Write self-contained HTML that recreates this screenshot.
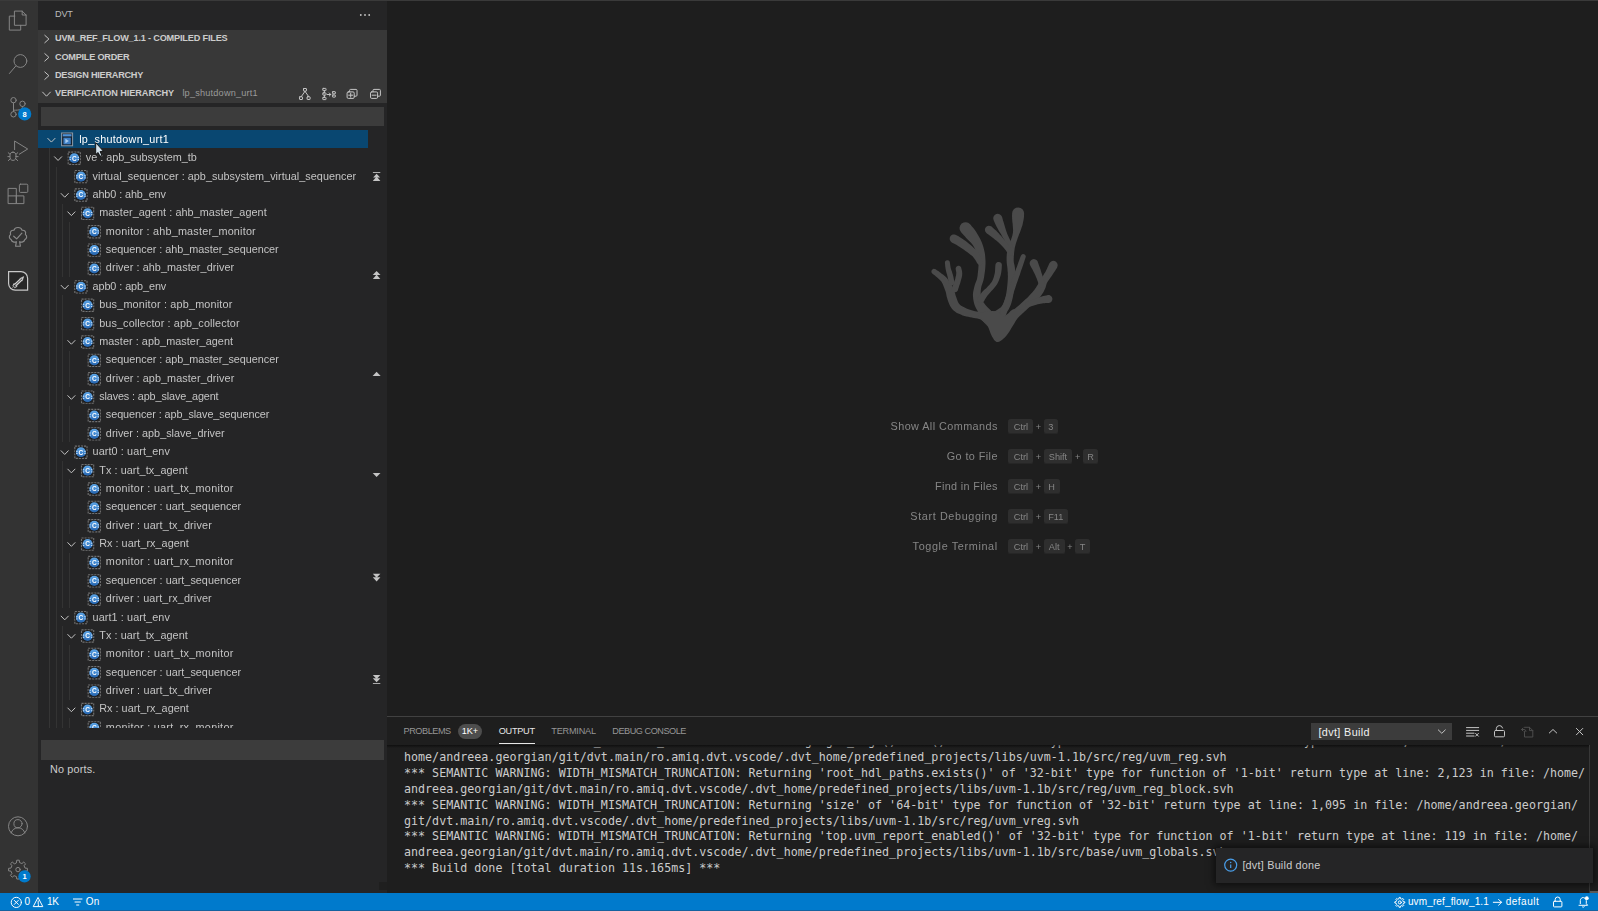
<!DOCTYPE html>
<html lang="en"><head><meta charset="utf-8"><title>DVT - Visual Studio Code</title>
<style>
html,body{margin:0;padding:0;}
body{width:1598px;height:911px;overflow:hidden;background:#1e1e1e;position:relative;
 font-family:"Liberation Sans",sans-serif;font-size:10.833px;color:#cccccc;}
.abs{position:absolute}
svg{position:absolute;overflow:visible}
.mono{font-family:"DejaVu Sans Mono","Liberation Mono",monospace}
.ai{fill:none;stroke:#858585;stroke-width:1;stroke-linecap:round;stroke-linejoin:round}
.cb{fill:none;stroke:#727272;stroke-width:1.1;stroke-dasharray:2.1 .95}
.ct{font-family:"Liberation Sans",sans-serif;font-size:6.5px;font-weight:700;fill:#fff;text-anchor:middle}
.cd{fill:none;stroke:#e4f0fc;stroke-width:.85}
.ic{fill:none;stroke:#c5c5c5;stroke-width:1;stroke-linecap:round;stroke-linejoin:round}
</style></head><body>
<div class="abs" id="activitybar" style="left:0;top:0;width:38px;height:893px;background:#333333"></div>
<div class="abs" id="sidebar" style="left:38px;top:0;width:349px;height:893px;background:#252526"></div>
<div class="abs" id="editor" style="left:387px;top:0;width:1211px;height:716px;background:#1e1e1e"></div>
<div class="abs" id="panel" style="left:387px;top:716px;width:1211px;height:177px;background:#1e1e1e;border-top:1px solid #414141;box-sizing:border-box"></div>
<div class="abs" id="statusbar" style="left:0;top:893px;width:1598px;height:18px;background:#007acc"></div>
<div class="abs" style="left:0;top:0;width:1598px;height:1px;background:#3a3a3a"></div>
<svg width="38" height="893" style="left:0;top:0" viewBox="0 0 38 893">
<g class="ai"><path d="M14.8 11.1h7.4l3.9 3.9v10.3H14.8z"/><path d="M22.2 11.1v3.9h3.9"/><path d="M14.8 16.1H9.3v14h11.4v-4.8"/></g>
<g class="ai"><circle cx="20.4" cy="61" r="6.4"/><path d="M15.9 65.9L9.4 73.5"/></g>
<g class="ai"><circle cx="13.5" cy="100.2" r="2.7"/><circle cx="13.5" cy="114.3" r="2.7"/><circle cx="22.5" cy="103.8" r="2.7"/><path d="M13.5 103v8.5"/><path d="M22.5 106.6c0 3.2-2.5 3.6-9 3.6"/></g>
<circle cx="24.7" cy="113.9" r="6.6" fill="#007acc"/>
<text x="24.7" y="116.6" text-anchor="middle" font-family="Liberation Sans, sans-serif" font-size="7.5" font-weight="700" fill="#fff">8</text>
<g class="ai"><path d="M14.6 149.6V141l13.1 8-8.4 5.2"/><ellipse cx="13" cy="156.3" rx="3.1" ry="4.1"/><path d="M10 154.3l-1.8-1.6M16 154.3l1.8-1.6M9.9 156.6H7.9M16.1 156.6h2M10.3 158.8l-2 1.8M15.7 158.8l2 1.8M10.6 153.2c.5-1.6 4.3-1.6 4.8 0"/></g>
<g class="ai"><path d="M8.5 188.4h7.8v15.2H8.5zM8.5 195.9h15.4v7.7h-7.6v-7.7"/><rect x="19.4" y="184.2" width="8.4" height="8.2" rx="1"/></g>
<g class="ai" style="stroke-width:1.15;stroke:#8a8a8a"><path d="M16.400 241.700C14.500 242.600 11.600 241.900 11.200 239.600C9 238.900 8.600 235.600 10.600 234.400C9.600 231.900 11.600 229.800 13.900 230.300C14.500 228.400 16.300 227.500 18 227.500C19.700 227.500 21.500 228.400 22.100 230.300C24.400 229.800 26.400 231.900 25.400 234.400C27.400 235.600 27 238.900 24.800 239.600C24.400 241.900 21.500 242.600 19.600 241.700L20.400 246.200H15.600Z"/><path d="M13.700 236.200l3 2.700 5.200-5.700"/></g>
<path d="M8.6 271.6H21a6.6 6.600 0 0 1 6.600 6.600v12H15.200a6.600 6.600 0 0 1-6.600-6.600z" fill="#272727" stroke="#c8c8c8" stroke-width="1.2"/>
<g fill="none" stroke-linecap="round" stroke-linejoin="round"><path d="M15 285.300l6.300-5.900" stroke="#d4d4d4" stroke-width="3.200" stroke-linecap="butt"/><path d="M20.200 278.400l3.500-1.800-1.300 3.800z" fill="#d4d4d4" stroke="#d4d4d4" stroke-width=".6"/><path d="M15.200 285.100l6.600-6.200" stroke="#2a2a2a" stroke-width=".9"/><path d="M14.100 283.500l-1.100 2.300M16.900 286.500l-2.300 1.100M13.900 286.400l-.9.900" stroke="#d4d4d4" stroke-width="1"/></g>
<g class="ai"><circle cx="18" cy="826.3" r="9.5"/><circle cx="18" cy="823.7" r="4.1"/><path d="M11.2 833c.8-3.400 3.600-5.200 6.800-5.200s6 1.800 6.800 5.200"/></g>
<g class="ai"><path d="M16.48 862.56L16.74 860.18L19.26 860.18L19.52 862.56L21.91 863.55L23.76 862.05L25.55 863.84L24.05 865.69L25.04 868.08L27.42 868.34L27.42 870.86L25.04 871.12L24.05 873.51L25.55 875.36L23.76 877.15L21.91 875.65L19.52 876.64L19.26 879.02L16.74 879.02L16.48 876.64L14.09 875.65L12.24 877.15L10.45 875.36L11.95 873.51L10.96 871.12L8.58 870.86L8.58 868.34L10.96 868.08L11.95 865.69L10.45 863.84L12.24 862.05L14.09 863.55Z"/><circle cx="18" cy="869.6" r="2.2"/></g>
<circle cx="24.5" cy="876.4" r="6.2" fill="#007acc"/>
<text x="24.5" y="879" text-anchor="middle" font-family="Liberation Sans, sans-serif" font-size="7.5" font-weight="700" fill="#fff">1</text>
</svg>
<div style="position:absolute;left:55.00px;top:0.00px;height:29.17px;line-height:29.17px;font-size:9.167px;font-weight:400;color:#bbbbbb;letter-spacing:-0.237px;white-space:pre;">DVT</div>
<svg width="14" height="4" style="left:359px;top:13px"><circle cx="1.8" cy="2" r="0.9" fill="#c5c5c5"/><circle cx="6" cy="2" r="0.9" fill="#c5c5c5"/><circle cx="10.2" cy="2" r="0.9" fill="#c5c5c5"/></svg>
<div class="abs" style="left:38px;top:30px;width:349px;height:73px;background:#383838"></div>
<div style="position:absolute;left:55.00px;top:29.17px;height:18.33px;line-height:18.33px;font-size:9.167px;font-weight:700;color:#cccccc;letter-spacing:-0.184px;white-space:pre;">UVM_REF_FLOW_1.1 - COMPILED FILES</div>
<div style="position:absolute;left:55.00px;top:47.50px;height:18.33px;line-height:18.33px;font-size:9.167px;font-weight:700;color:#cccccc;letter-spacing:-0.233px;white-space:pre;">COMPILE ORDER</div>
<div style="position:absolute;left:55.00px;top:65.84px;height:18.33px;line-height:18.33px;font-size:9.167px;font-weight:700;color:#cccccc;letter-spacing:-0.251px;white-space:pre;">DESIGN HIERARCHY</div>
<div style="position:absolute;left:55.00px;top:84.17px;height:18.33px;line-height:18.33px;font-size:9.167px;font-weight:700;color:#cccccc;letter-spacing:-0.087px;white-space:pre;">VERIFICATION HIERARCHY</div>
<div style="position:absolute;left:182.40px;top:84.17px;height:18.33px;line-height:18.33px;font-size:9.167px;font-weight:400;color:#9a9a9a;letter-spacing:0.200px;white-space:pre;">lp_shutdown_urt1</div>
<svg width="349" height="80" style="left:38px;top:28px" viewBox="38 28 349 80"><g class="ic">
<path d="M44.8 35.30l4.100 3.700-4.100 3.700"/>
<path d="M44.8 53.63l4.100 3.700-4.100 3.700"/>
<path d="M44.8 71.97l4.100 3.700-4.100 3.700"/>
<path d="M42.600 92.100l3.900 4.100 3.900-4.100"/>
</g>
<g class="ic">
<rect x="303.500" y="88.500" width="3" height="2.600" rx=".4"/><rect x="299.500" y="96.800" width="3" height="2.700" rx=".4"/><rect x="307.100" y="96.800" width="3" height="2.700" rx=".4"/><path d="M305 91.300l-3.700 5.300M305 91.300l3.700 5.300"/>
<rect x="322.800" y="88.400" width="3.200" height="2.200" rx=".4"/><rect x="322.800" y="92.900" width="3.200" height="2.200" rx=".4"/><rect x="322.800" y="97.400" width="3.200" height="2.200" rx=".4"/><path d="M324.400 90.700v2.100M324.400 95.200v2.100M327.300 94.500h3.400M329.300 93l1.500 1.500-1.500 1.500"/><rect x="332.500" y="91.700" width="2.900" height="2.100" rx=".4"/><rect x="332.500" y="95" width="2.900" height="2.100" rx=".4"/>
<rect x="347.100" y="91.900" width="7.100" height="6.500" rx="1.200"/><path d="M349.600 91.800v-1.400a1 1 0 0 1 1-1h5.400a1 1 0 0 1 1 1v4.800a1 1 0 0 1-1 1h-1.600M348.700 95.200h4M350.700 93.200v4"/>
<rect x="370.500" y="91.900" width="7.100" height="6.500" rx="1.200"/><path d="M373 91.800v-1.400a1 1 0 0 1 1-1h5.400a1 1 0 0 1 1 1v4.800a1 1 0 0 1-1 1h-1.600M372.100 95.200h4"/>
</g></svg>
<div class="abs" style="left:41px;top:106.6px;width:343px;height:19.5px;background:#3c3c3c"></div>
<div class="abs" style="left:41px;top:740px;width:343px;height:19.5px;background:#3c3c3c"></div>
<div style="position:absolute;left:50.00px;top:760.00px;height:18.33px;line-height:18.33px;font-size:10.833px;font-weight:400;color:#cccccc;letter-spacing:0.161px;white-space:pre;">No ports.</div>
<div class="abs" id="tree" style="left:38px;top:130px;width:349px;height:597.5px;overflow:hidden;will-change:transform">
<div class="abs" style="left:0;top:0;width:330px;height:18.38px;background:#094771"></div>
<div class="abs" style="left:11.00px;top:18.38px;width:1px;height:588.00px;background:#353535"></div>
<div class="abs" style="left:18.00px;top:36.75px;width:1px;height:569.62px;background:#333333"></div>
<div class="abs" style="left:24.00px;top:73.50px;width:1px;height:73.50px;background:#333333"></div>
<div class="abs" style="left:24.00px;top:165.38px;width:1px;height:147.00px;background:#333333"></div>
<div class="abs" style="left:24.00px;top:330.75px;width:1px;height:147.00px;background:#333333"></div>
<div class="abs" style="left:24.00px;top:496.12px;width:1px;height:110.25px;background:#333333"></div>
<div class="abs" style="left:31.00px;top:91.88px;width:1px;height:55.12px;background:#333333"></div>
<div class="abs" style="left:31.00px;top:220.50px;width:1px;height:36.75px;background:#333333"></div>
<div class="abs" style="left:31.00px;top:275.62px;width:1px;height:36.75px;background:#333333"></div>
<div class="abs" style="left:31.00px;top:349.12px;width:1px;height:55.12px;background:#333333"></div>
<div class="abs" style="left:31.00px;top:422.62px;width:1px;height:55.12px;background:#333333"></div>
<div class="abs" style="left:31.00px;top:514.50px;width:1px;height:55.12px;background:#333333"></div>
<div class="abs" style="left:31.00px;top:588.00px;width:1px;height:18.38px;background:#333333"></div>
<div style="position:absolute;left:41.20px;top:-0.20px;height:18.38px;line-height:18.38px;font-size:10.833px;font-weight:400;color:#ffffff;letter-spacing:0.275px;white-space:pre;">lp_shutdown_urt1</div>
<div style="position:absolute;left:47.87px;top:18.18px;height:18.38px;line-height:18.38px;font-size:10.833px;font-weight:400;color:#c4c4c4;letter-spacing:-0.026px;white-space:pre;">ve : apb_subsystem_tb</div>
<div style="position:absolute;left:54.53px;top:36.55px;height:18.38px;line-height:18.38px;font-size:10.833px;font-weight:400;color:#c4c4c4;letter-spacing:0.037px;white-space:pre;">virtual_sequencer : apb_subsystem_virtual_sequencer</div>
<div style="position:absolute;left:54.53px;top:54.92px;height:18.38px;line-height:18.38px;font-size:10.833px;font-weight:400;color:#c4c4c4;letter-spacing:-0.093px;white-space:pre;">ahb0 : ahb_env</div>
<div style="position:absolute;left:61.20px;top:73.30px;height:18.38px;line-height:18.38px;font-size:10.833px;font-weight:400;color:#c4c4c4;letter-spacing:0.066px;white-space:pre;">master_agent : ahb_master_agent</div>
<div style="position:absolute;left:67.87px;top:91.67px;height:18.38px;line-height:18.38px;font-size:10.833px;font-weight:400;color:#c4c4c4;letter-spacing:0.201px;white-space:pre;">monitor : ahb_master_monitor</div>
<div style="position:absolute;left:67.87px;top:110.05px;height:18.38px;line-height:18.38px;font-size:10.833px;font-weight:400;color:#c4c4c4;letter-spacing:-0.016px;white-space:pre;">sequencer : ahb_master_sequencer</div>
<div style="position:absolute;left:67.87px;top:128.43px;height:18.38px;line-height:18.38px;font-size:10.833px;font-weight:400;color:#c4c4c4;letter-spacing:0.074px;white-space:pre;">driver : ahb_master_driver</div>
<div style="position:absolute;left:54.53px;top:146.80px;height:18.38px;line-height:18.38px;font-size:10.833px;font-weight:400;color:#c4c4c4;letter-spacing:-0.071px;white-space:pre;">apb0 : apb_env</div>
<div style="position:absolute;left:61.20px;top:165.18px;height:18.38px;line-height:18.38px;font-size:10.833px;font-weight:400;color:#c4c4c4;letter-spacing:0.182px;white-space:pre;">bus_monitor : apb_monitor</div>
<div style="position:absolute;left:61.20px;top:183.55px;height:18.38px;line-height:18.38px;font-size:10.833px;font-weight:400;color:#c4c4c4;letter-spacing:0.113px;white-space:pre;">bus_collector : apb_collector</div>
<div style="position:absolute;left:61.20px;top:201.93px;height:18.38px;line-height:18.38px;font-size:10.833px;font-weight:400;color:#c4c4c4;letter-spacing:0.058px;white-space:pre;">master : apb_master_agent</div>
<div style="position:absolute;left:67.87px;top:220.30px;height:18.38px;line-height:18.38px;font-size:10.833px;font-weight:400;color:#c4c4c4;letter-spacing:-0.011px;white-space:pre;">sequencer : apb_master_sequencer</div>
<div style="position:absolute;left:67.87px;top:238.68px;height:18.38px;line-height:18.38px;font-size:10.833px;font-weight:400;color:#c4c4c4;letter-spacing:0.080px;white-space:pre;">driver : apb_master_driver</div>
<div style="position:absolute;left:61.20px;top:257.05px;height:18.38px;line-height:18.38px;font-size:10.833px;font-weight:400;color:#c4c4c4;letter-spacing:-0.121px;white-space:pre;">slaves : apb_slave_agent</div>
<div style="position:absolute;left:67.87px;top:275.43px;height:18.38px;line-height:18.38px;font-size:10.833px;font-weight:400;color:#c4c4c4;letter-spacing:-0.071px;white-space:pre;">sequencer : apb_slave_sequencer</div>
<div style="position:absolute;left:67.87px;top:293.80px;height:18.38px;line-height:18.38px;font-size:10.833px;font-weight:400;color:#c4c4c4;letter-spacing:0.009px;white-space:pre;">driver : apb_slave_driver</div>
<div style="position:absolute;left:54.53px;top:312.18px;height:18.38px;line-height:18.38px;font-size:10.833px;font-weight:400;color:#c4c4c4;letter-spacing:0.100px;white-space:pre;">uart0 : uart_env</div>
<div style="position:absolute;left:61.20px;top:330.55px;height:18.38px;line-height:18.38px;font-size:10.833px;font-weight:400;color:#c4c4c4;letter-spacing:0.078px;white-space:pre;">Tx : uart_tx_agent</div>
<div style="position:absolute;left:67.87px;top:348.93px;height:18.38px;line-height:18.38px;font-size:10.833px;font-weight:400;color:#c4c4c4;letter-spacing:0.300px;white-space:pre;">monitor : uart_tx_monitor</div>
<div style="position:absolute;left:67.87px;top:367.30px;height:18.38px;line-height:18.38px;font-size:10.833px;font-weight:400;color:#c4c4c4;letter-spacing:0.016px;white-space:pre;">sequencer : uart_sequencer</div>
<div style="position:absolute;left:67.87px;top:385.68px;height:18.38px;line-height:18.38px;font-size:10.833px;font-weight:400;color:#c4c4c4;letter-spacing:0.165px;white-space:pre;">driver : uart_tx_driver</div>
<div style="position:absolute;left:61.20px;top:404.05px;height:18.38px;line-height:18.38px;font-size:10.833px;font-weight:400;color:#c4c4c4;letter-spacing:0.032px;white-space:pre;">Rx : uart_rx_agent</div>
<div style="position:absolute;left:67.87px;top:422.43px;height:18.38px;line-height:18.38px;font-size:10.833px;font-weight:400;color:#c4c4c4;letter-spacing:0.270px;white-space:pre;">monitor : uart_rx_monitor</div>
<div style="position:absolute;left:67.87px;top:440.80px;height:18.38px;line-height:18.38px;font-size:10.833px;font-weight:400;color:#c4c4c4;letter-spacing:0.016px;white-space:pre;">sequencer : uart_sequencer</div>
<div style="position:absolute;left:67.87px;top:459.18px;height:18.38px;line-height:18.38px;font-size:10.833px;font-weight:400;color:#c4c4c4;letter-spacing:0.133px;white-space:pre;">driver : uart_rx_driver</div>
<div style="position:absolute;left:54.53px;top:477.55px;height:18.38px;line-height:18.38px;font-size:10.833px;font-weight:400;color:#c4c4c4;letter-spacing:0.100px;white-space:pre;">uart1 : uart_env</div>
<div style="position:absolute;left:61.20px;top:495.93px;height:18.38px;line-height:18.38px;font-size:10.833px;font-weight:400;color:#c4c4c4;letter-spacing:0.078px;white-space:pre;">Tx : uart_tx_agent</div>
<div style="position:absolute;left:67.87px;top:514.30px;height:18.38px;line-height:18.38px;font-size:10.833px;font-weight:400;color:#c4c4c4;letter-spacing:0.300px;white-space:pre;">monitor : uart_tx_monitor</div>
<div style="position:absolute;left:67.87px;top:532.67px;height:18.38px;line-height:18.38px;font-size:10.833px;font-weight:400;color:#c4c4c4;letter-spacing:0.016px;white-space:pre;">sequencer : uart_sequencer</div>
<div style="position:absolute;left:67.87px;top:551.05px;height:18.38px;line-height:18.38px;font-size:10.833px;font-weight:400;color:#c4c4c4;letter-spacing:0.165px;white-space:pre;">driver : uart_tx_driver</div>
<div style="position:absolute;left:61.20px;top:569.42px;height:18.38px;line-height:18.38px;font-size:10.833px;font-weight:400;color:#c4c4c4;letter-spacing:0.032px;white-space:pre;">Rx : uart_rx_agent</div>
<div style="position:absolute;left:67.87px;top:587.80px;height:18.38px;line-height:18.38px;font-size:10.833px;font-weight:400;color:#c4c4c4;letter-spacing:0.270px;white-space:pre;">monitor : uart_rx_monitor</div>
<svg width="349" height="597.5" style="left:0;top:0"><defs><linearGradient id="cg" x1="0" y1="0" x2="0" y2="1"><stop offset="0" stop-color="#5fa6e6"/><stop offset=".55" stop-color="#3f86cf"/><stop offset="1" stop-color="#2460a8"/></linearGradient></defs>
<path class="ic" d="M9.80 8.39l3.600 3.700 3.600-3.700"/>
<g transform="translate(23.10 2.49)"><rect x=".5" y=".5" width="11" height="12.800" fill="#16222f" stroke="#8d9aa8" stroke-width="1"/><rect x="1.600" y="1.700" width="8.800" height="2.200" fill="#4f93d8"/><rect x="2.300" y="5.200" width="7.400" height="6.600" fill="#3f7fc4"/><path d="M4.300 6.300l3.500 2.200-3.500 2.200z" fill="#a9cdf0"/></g>
<path class="ic" d="M16.47 26.76l3.600 3.700 3.600-3.700"/>
<g transform="translate(29.52 21.51)"><rect class="cb" x=".65" y=".65" width="12.200" height="12.200"/><circle cx="6.750" cy="6.750" r="5.700" fill="#161616"/><circle cx="6.750" cy="6.750" r="5.050" fill="url(#cg)"/><text class="ct" x="6.800" y="9.050">C</text><path class="cd" d="M2 5.850h1.400M2 8.050h1.400M10.100 5.850h1.400M10.100 8.050h1.400"/></g>
<g transform="translate(36.18 39.89)"><rect class="cb" x=".65" y=".65" width="12.200" height="12.200"/><circle cx="6.750" cy="6.750" r="5.700" fill="#161616"/><circle cx="6.750" cy="6.750" r="5.050" fill="url(#cg)"/><text class="ct" x="6.800" y="9.050">C</text><path class="cd" d="M2 5.850h1.400M2 8.050h1.400M10.100 5.850h1.400M10.100 8.050h1.400"/></g>
<path class="ic" d="M23.13 63.51l3.600 3.700 3.600-3.700"/>
<g transform="translate(36.18 58.26)"><rect class="cb" x=".65" y=".65" width="12.200" height="12.200"/><circle cx="6.750" cy="6.750" r="5.700" fill="#161616"/><circle cx="6.750" cy="6.750" r="5.050" fill="url(#cg)"/><text class="ct" x="6.800" y="9.050">C</text><path class="cd" d="M2 5.850h1.400M2 8.050h1.400M10.100 5.850h1.400M10.100 8.050h1.400"/></g>
<path class="ic" d="M29.80 81.89l3.600 3.700 3.600-3.700"/>
<g transform="translate(42.85 76.64)"><rect class="cb" x=".65" y=".65" width="12.200" height="12.200"/><circle cx="6.750" cy="6.750" r="5.700" fill="#161616"/><circle cx="6.750" cy="6.750" r="5.050" fill="url(#cg)"/><text class="ct" x="6.800" y="9.050">C</text><path class="cd" d="M2 5.850h1.400M2 8.050h1.400M10.100 5.850h1.400M10.100 8.050h1.400"/></g>
<g transform="translate(49.52 95.01)"><rect class="cb" x=".65" y=".65" width="12.200" height="12.200"/><circle cx="6.750" cy="6.750" r="5.700" fill="#161616"/><circle cx="6.750" cy="6.750" r="5.050" fill="url(#cg)"/><text class="ct" x="6.800" y="9.050">C</text><path class="cd" d="M2 5.850h1.400M2 8.050h1.400M10.100 5.850h1.400M10.100 8.050h1.400"/></g>
<g transform="translate(49.52 113.39)"><rect class="cb" x=".65" y=".65" width="12.200" height="12.200"/><circle cx="6.750" cy="6.750" r="5.700" fill="#161616"/><circle cx="6.750" cy="6.750" r="5.050" fill="url(#cg)"/><text class="ct" x="6.800" y="9.050">C</text><path class="cd" d="M2 5.850h1.400M2 8.050h1.400M10.100 5.850h1.400M10.100 8.050h1.400"/></g>
<g transform="translate(49.52 131.76)"><rect class="cb" x=".65" y=".65" width="12.200" height="12.200"/><circle cx="6.750" cy="6.750" r="5.700" fill="#161616"/><circle cx="6.750" cy="6.750" r="5.050" fill="url(#cg)"/><text class="ct" x="6.800" y="9.050">C</text><path class="cd" d="M2 5.850h1.400M2 8.050h1.400M10.100 5.850h1.400M10.100 8.050h1.400"/></g>
<path class="ic" d="M23.13 155.39l3.600 3.700 3.600-3.700"/>
<g transform="translate(36.18 150.14)"><rect class="cb" x=".65" y=".65" width="12.200" height="12.200"/><circle cx="6.750" cy="6.750" r="5.700" fill="#161616"/><circle cx="6.750" cy="6.750" r="5.050" fill="url(#cg)"/><text class="ct" x="6.800" y="9.050">C</text><path class="cd" d="M2 5.850h1.400M2 8.050h1.400M10.100 5.850h1.400M10.100 8.050h1.400"/></g>
<g transform="translate(42.85 168.51)"><rect class="cb" x=".65" y=".65" width="12.200" height="12.200"/><circle cx="6.750" cy="6.750" r="5.700" fill="#161616"/><circle cx="6.750" cy="6.750" r="5.050" fill="url(#cg)"/><text class="ct" x="6.800" y="9.050">C</text><path class="cd" d="M2 5.850h1.400M2 8.050h1.400M10.100 5.850h1.400M10.100 8.050h1.400"/></g>
<g transform="translate(42.85 186.89)"><rect class="cb" x=".65" y=".65" width="12.200" height="12.200"/><circle cx="6.750" cy="6.750" r="5.700" fill="#161616"/><circle cx="6.750" cy="6.750" r="5.050" fill="url(#cg)"/><text class="ct" x="6.800" y="9.050">C</text><path class="cd" d="M2 5.850h1.400M2 8.050h1.400M10.100 5.850h1.400M10.100 8.050h1.400"/></g>
<path class="ic" d="M29.80 210.51l3.600 3.700 3.600-3.700"/>
<g transform="translate(42.85 205.26)"><rect class="cb" x=".65" y=".65" width="12.200" height="12.200"/><circle cx="6.750" cy="6.750" r="5.700" fill="#161616"/><circle cx="6.750" cy="6.750" r="5.050" fill="url(#cg)"/><text class="ct" x="6.800" y="9.050">C</text><path class="cd" d="M2 5.850h1.400M2 8.050h1.400M10.100 5.850h1.400M10.100 8.050h1.400"/></g>
<g transform="translate(49.52 223.64)"><rect class="cb" x=".65" y=".65" width="12.200" height="12.200"/><circle cx="6.750" cy="6.750" r="5.700" fill="#161616"/><circle cx="6.750" cy="6.750" r="5.050" fill="url(#cg)"/><text class="ct" x="6.800" y="9.050">C</text><path class="cd" d="M2 5.850h1.400M2 8.050h1.400M10.100 5.850h1.400M10.100 8.050h1.400"/></g>
<g transform="translate(49.52 242.01)"><rect class="cb" x=".65" y=".65" width="12.200" height="12.200"/><circle cx="6.750" cy="6.750" r="5.700" fill="#161616"/><circle cx="6.750" cy="6.750" r="5.050" fill="url(#cg)"/><text class="ct" x="6.800" y="9.050">C</text><path class="cd" d="M2 5.850h1.400M2 8.050h1.400M10.100 5.850h1.400M10.100 8.050h1.400"/></g>
<path class="ic" d="M29.80 265.64l3.600 3.700 3.600-3.700"/>
<g transform="translate(42.85 260.39)"><rect class="cb" x=".65" y=".65" width="12.200" height="12.200"/><circle cx="6.750" cy="6.750" r="5.700" fill="#161616"/><circle cx="6.750" cy="6.750" r="5.050" fill="url(#cg)"/><text class="ct" x="6.800" y="9.050">C</text><path class="cd" d="M2 5.850h1.400M2 8.050h1.400M10.100 5.850h1.400M10.100 8.050h1.400"/></g>
<g transform="translate(49.52 278.76)"><rect class="cb" x=".65" y=".65" width="12.200" height="12.200"/><circle cx="6.750" cy="6.750" r="5.700" fill="#161616"/><circle cx="6.750" cy="6.750" r="5.050" fill="url(#cg)"/><text class="ct" x="6.800" y="9.050">C</text><path class="cd" d="M2 5.850h1.400M2 8.050h1.400M10.100 5.850h1.400M10.100 8.050h1.400"/></g>
<g transform="translate(49.52 297.14)"><rect class="cb" x=".65" y=".65" width="12.200" height="12.200"/><circle cx="6.750" cy="6.750" r="5.700" fill="#161616"/><circle cx="6.750" cy="6.750" r="5.050" fill="url(#cg)"/><text class="ct" x="6.800" y="9.050">C</text><path class="cd" d="M2 5.850h1.400M2 8.050h1.400M10.100 5.850h1.400M10.100 8.050h1.400"/></g>
<path class="ic" d="M23.13 320.76l3.600 3.700 3.600-3.700"/>
<g transform="translate(36.18 315.51)"><rect class="cb" x=".65" y=".65" width="12.200" height="12.200"/><circle cx="6.750" cy="6.750" r="5.700" fill="#161616"/><circle cx="6.750" cy="6.750" r="5.050" fill="url(#cg)"/><text class="ct" x="6.800" y="9.050">C</text><path class="cd" d="M2 5.850h1.400M2 8.050h1.400M10.100 5.850h1.400M10.100 8.050h1.400"/></g>
<path class="ic" d="M29.80 339.14l3.600 3.700 3.600-3.700"/>
<g transform="translate(42.85 333.89)"><rect class="cb" x=".65" y=".65" width="12.200" height="12.200"/><circle cx="6.750" cy="6.750" r="5.700" fill="#161616"/><circle cx="6.750" cy="6.750" r="5.050" fill="url(#cg)"/><text class="ct" x="6.800" y="9.050">C</text><path class="cd" d="M2 5.850h1.400M2 8.050h1.400M10.100 5.850h1.400M10.100 8.050h1.400"/></g>
<g transform="translate(49.52 352.26)"><rect class="cb" x=".65" y=".65" width="12.200" height="12.200"/><circle cx="6.750" cy="6.750" r="5.700" fill="#161616"/><circle cx="6.750" cy="6.750" r="5.050" fill="url(#cg)"/><text class="ct" x="6.800" y="9.050">C</text><path class="cd" d="M2 5.850h1.400M2 8.050h1.400M10.100 5.850h1.400M10.100 8.050h1.400"/></g>
<g transform="translate(49.52 370.64)"><rect class="cb" x=".65" y=".65" width="12.200" height="12.200"/><circle cx="6.750" cy="6.750" r="5.700" fill="#161616"/><circle cx="6.750" cy="6.750" r="5.050" fill="url(#cg)"/><text class="ct" x="6.800" y="9.050">C</text><path class="cd" d="M2 5.850h1.400M2 8.050h1.400M10.100 5.850h1.400M10.100 8.050h1.400"/></g>
<g transform="translate(49.52 389.01)"><rect class="cb" x=".65" y=".65" width="12.200" height="12.200"/><circle cx="6.750" cy="6.750" r="5.700" fill="#161616"/><circle cx="6.750" cy="6.750" r="5.050" fill="url(#cg)"/><text class="ct" x="6.800" y="9.050">C</text><path class="cd" d="M2 5.850h1.400M2 8.050h1.400M10.100 5.850h1.400M10.100 8.050h1.400"/></g>
<path class="ic" d="M29.80 412.64l3.600 3.700 3.600-3.700"/>
<g transform="translate(42.85 407.39)"><rect class="cb" x=".65" y=".65" width="12.200" height="12.200"/><circle cx="6.750" cy="6.750" r="5.700" fill="#161616"/><circle cx="6.750" cy="6.750" r="5.050" fill="url(#cg)"/><text class="ct" x="6.800" y="9.050">C</text><path class="cd" d="M2 5.850h1.400M2 8.050h1.400M10.100 5.850h1.400M10.100 8.050h1.400"/></g>
<g transform="translate(49.52 425.76)"><rect class="cb" x=".65" y=".65" width="12.200" height="12.200"/><circle cx="6.750" cy="6.750" r="5.700" fill="#161616"/><circle cx="6.750" cy="6.750" r="5.050" fill="url(#cg)"/><text class="ct" x="6.800" y="9.050">C</text><path class="cd" d="M2 5.850h1.400M2 8.050h1.400M10.100 5.850h1.400M10.100 8.050h1.400"/></g>
<g transform="translate(49.52 444.14)"><rect class="cb" x=".65" y=".65" width="12.200" height="12.200"/><circle cx="6.750" cy="6.750" r="5.700" fill="#161616"/><circle cx="6.750" cy="6.750" r="5.050" fill="url(#cg)"/><text class="ct" x="6.800" y="9.050">C</text><path class="cd" d="M2 5.850h1.400M2 8.050h1.400M10.100 5.850h1.400M10.100 8.050h1.400"/></g>
<g transform="translate(49.52 462.51)"><rect class="cb" x=".65" y=".65" width="12.200" height="12.200"/><circle cx="6.750" cy="6.750" r="5.700" fill="#161616"/><circle cx="6.750" cy="6.750" r="5.050" fill="url(#cg)"/><text class="ct" x="6.800" y="9.050">C</text><path class="cd" d="M2 5.850h1.400M2 8.050h1.400M10.100 5.850h1.400M10.100 8.050h1.400"/></g>
<path class="ic" d="M23.13 486.14l3.600 3.700 3.600-3.700"/>
<g transform="translate(36.18 480.89)"><rect class="cb" x=".65" y=".65" width="12.200" height="12.200"/><circle cx="6.750" cy="6.750" r="5.700" fill="#161616"/><circle cx="6.750" cy="6.750" r="5.050" fill="url(#cg)"/><text class="ct" x="6.800" y="9.050">C</text><path class="cd" d="M2 5.850h1.400M2 8.050h1.400M10.100 5.850h1.400M10.100 8.050h1.400"/></g>
<path class="ic" d="M29.80 504.51l3.600 3.700 3.600-3.700"/>
<g transform="translate(42.85 499.26)"><rect class="cb" x=".65" y=".65" width="12.200" height="12.200"/><circle cx="6.750" cy="6.750" r="5.700" fill="#161616"/><circle cx="6.750" cy="6.750" r="5.050" fill="url(#cg)"/><text class="ct" x="6.800" y="9.050">C</text><path class="cd" d="M2 5.850h1.400M2 8.050h1.400M10.100 5.850h1.400M10.100 8.050h1.400"/></g>
<g transform="translate(49.52 517.64)"><rect class="cb" x=".65" y=".65" width="12.200" height="12.200"/><circle cx="6.750" cy="6.750" r="5.700" fill="#161616"/><circle cx="6.750" cy="6.750" r="5.050" fill="url(#cg)"/><text class="ct" x="6.800" y="9.050">C</text><path class="cd" d="M2 5.850h1.400M2 8.050h1.400M10.100 5.850h1.400M10.100 8.050h1.400"/></g>
<g transform="translate(49.52 536.01)"><rect class="cb" x=".65" y=".65" width="12.200" height="12.200"/><circle cx="6.750" cy="6.750" r="5.700" fill="#161616"/><circle cx="6.750" cy="6.750" r="5.050" fill="url(#cg)"/><text class="ct" x="6.800" y="9.050">C</text><path class="cd" d="M2 5.850h1.400M2 8.050h1.400M10.100 5.850h1.400M10.100 8.050h1.400"/></g>
<g transform="translate(49.52 554.39)"><rect class="cb" x=".65" y=".65" width="12.200" height="12.200"/><circle cx="6.750" cy="6.750" r="5.700" fill="#161616"/><circle cx="6.750" cy="6.750" r="5.050" fill="url(#cg)"/><text class="ct" x="6.800" y="9.050">C</text><path class="cd" d="M2 5.850h1.400M2 8.050h1.400M10.100 5.850h1.400M10.100 8.050h1.400"/></g>
<path class="ic" d="M29.80 578.01l3.600 3.700 3.600-3.700"/>
<g transform="translate(42.85 572.76)"><rect class="cb" x=".65" y=".65" width="12.200" height="12.200"/><circle cx="6.750" cy="6.750" r="5.700" fill="#161616"/><circle cx="6.750" cy="6.750" r="5.050" fill="url(#cg)"/><text class="ct" x="6.800" y="9.050">C</text><path class="cd" d="M2 5.850h1.400M2 8.050h1.400M10.100 5.850h1.400M10.100 8.050h1.400"/></g>
<g transform="translate(49.52 591.14)"><rect class="cb" x=".65" y=".65" width="12.200" height="12.200"/><circle cx="6.750" cy="6.750" r="5.700" fill="#161616"/><circle cx="6.750" cy="6.750" r="5.050" fill="url(#cg)"/><text class="ct" x="6.800" y="9.050">C</text><path class="cd" d="M2 5.850h1.400M2 8.050h1.400M10.100 5.850h1.400M10.100 8.050h1.400"/></g>
</svg></div>
<svg width="20" height="600" style="left:367px;top:130px" viewBox="367 130 20 600"><g fill="#c5c5c5" stroke="none">
<rect x="372.90" y="172.150" width="7.400" height=".85"/><path d="M373.10 177.40L376.60 173.80L380.10 177.40z"/><path d="M372.80 181.10L376.60 176.60L380.40 181.10z"/>
<path d="M372.70 275.10L376.60 271.00L380.50 275.10z"/><path d="M372.90 279.00L376.60 274.60L380.30 279.00z"/>
<path d="M372.60 376.10L376.60 371.80L380.60 376.10z"/>
<path d="M372.70 473.00L376.60 477.10L380.50 473.00z"/>
<path d="M372.80 573.80L376.60 577.80L380.40 573.80z"/><path d="M372.80 577.20L376.60 581.40L380.40 577.20z"/>
<path d="M372.80 675.00L376.60 678.90L380.40 675.00z"/><path d="M372.80 678.20L376.60 682.20L380.40 678.20z"/><rect x="372.90" y="683.100" width="7.400" height=".85"/>
</g></svg>
<svg width="20" height="24" style="left:90px;top:138px" viewBox="90 138 20 24"><path d="M95.700 142.600V154.500L98.100 152.500L100 156.300L101.900 155.400L100.100 151.600L103.300 151.100Z" fill="#d3e1eb" stroke="#0c0c0c" stroke-width=".9" stroke-linejoin="round"/></svg>
<svg width="240" height="180" style="left:880px;top:180px" viewBox="880 180 240 180"><g>
<g fill="#4a4a4a" stroke="none">
<path d="M932.5 273.7L933.1 274.2L933.9 274.8L934.9 275.6L935.9 276.4L936.9 277.3L938.0 278.3L939.1 279.3L940.1 280.3L941.1 281.3L941.9 282.5L942.7 284.0L943.5 285.9L944.3 287.9L945.0 289.9L945.6 291.6L946.0 293.1L946.3 294.6L946.6 296.2L947.1 298.1L947.7 300.1L948.4 301.9L949.2 303.9L950.1 305.9L951.4 308.0L953.0 309.9L954.9 311.6L956.9 312.9L958.9 313.8L960.8 314.6L962.6 315.4L964.5 316.0L966.4 316.5L968.2 316.8L970.0 317.2L971.8 317.5L973.7 317.9L975.7 318.2L977.4 318.4L979.1 318.9L980.6 319.5L982.4 320.7L984.3 322.3L986.3 324.1L988.1 325.7L989.4 326.9L991.5 327.6L993.6 327.5L995.6 326.6L997.1 324.9L997.9 322.9L997.7 320.7L996.8 318.7L995.2 317.2L993.6 316.6L991.4 315.8L988.7 314.8L985.9 313.8L983.3 312.9L980.9 312.3L978.7 311.8L976.8 311.5L975.0 311.2L973.3 310.8L971.6 310.3L970.0 309.8L968.5 309.3L967.0 308.7L965.6 308.1L964.1 307.3L962.6 306.5L961.2 305.7L960.1 304.9L959.3 304.1L958.7 303.2L958.0 301.9L957.4 300.4L956.8 298.7L956.2 297.1L955.7 295.7L955.3 294.2L954.9 292.6L954.3 290.6L953.5 288.6L952.5 286.5L951.3 284.5L950.0 282.4L948.7 280.4L947.3 278.6L945.9 277.0L944.4 275.7L943.0 274.6L941.7 273.7L940.6 272.8L939.5 272.0L938.3 271.1L937.2 270.4L936.3 269.8L935.7 269.3L934.7 268.9L933.7 268.8L932.7 269.2L931.9 269.9L931.4 270.9L931.4 271.9L931.8 272.9Z"/>
<path d="M944.9 263.0L945.0 263.7L945.1 264.8L945.2 266.2L945.4 267.6L945.6 269.1L945.9 270.5L946.2 271.8L946.6 273.2L947.0 274.5L947.3 275.8L947.7 277.3L948.0 279.0L948.4 280.7L948.7 282.2L949.0 283.2L949.4 284.2L950.2 285.0L951.2 285.4L952.3 285.4L953.3 284.9L954.1 284.1L954.5 283.1L954.5 282.0L954.3 281.0L953.9 279.5L953.6 277.8L953.2 276.0L952.8 274.4L952.3 272.9L951.9 271.6L951.4 270.3L951.0 269.1L950.7 268.0L950.5 266.8L950.3 265.5L950.1 264.3L950.0 263.2L949.9 262.4L949.6 261.5L949.0 260.7L948.1 260.3L947.1 260.2L946.2 260.5L945.4 261.1L945.0 262.0Z"/>
<path d="M955.7 269.0L955.8 269.8L956.0 270.9L956.2 272.0L956.3 273.1L956.2 274.0L956.1 274.9L955.9 276.0L955.6 277.1L955.3 278.5L954.9 279.9L954.3 281.5L953.7 283.4L953.0 285.3L952.4 287.0L952.0 288.2L951.8 289.4L952.1 290.5L952.9 291.5L953.9 292.1L955.1 292.3L956.3 292.0L957.2 291.2L957.9 290.2L958.2 289.0L958.8 287.3L959.4 285.3L960.1 283.4L960.6 281.6L961.0 280.1L961.4 278.7L961.8 277.3L962.1 275.8L962.2 274.3L962.2 272.7L962.0 271.1L961.7 269.8L961.4 268.7L961.3 268.0L960.9 267.0L960.1 266.2L959.1 265.8L958.0 265.8L957.0 266.2L956.2 266.9L955.7 267.9Z"/>
<path d="M961.0 232.1L961.7 232.9L962.7 234.0L963.8 235.3L965.0 236.6L966.2 237.9L967.4 239.2L968.7 240.5L970.0 241.7L971.2 242.9L972.2 244.2L973.1 245.5L974.0 247.1L974.8 248.7L975.5 250.4L976.1 251.9L976.6 253.3L977.0 254.6L977.3 255.9L977.6 257.3L977.9 258.6L978.1 260.1L978.2 261.4L978.4 262.8L978.5 264.2L978.5 265.6L978.4 267.0L978.3 268.4L978.2 269.9L978.0 271.3L977.9 272.8L977.7 274.2L977.6 275.5L977.4 276.7L977.2 277.8L977.0 279.0L976.7 280.1L976.2 281.3L975.7 282.6L975.1 284.1L974.6 285.7L974.2 287.3L973.8 288.9L973.4 290.7L973.1 292.6L972.9 294.6L973.0 296.6L973.2 298.7L973.5 300.8L974.0 302.9L974.6 305.0L975.4 307.0L976.3 308.8L977.3 310.6L978.5 312.5L979.9 314.5L981.8 317.0L984.0 319.7L986.3 322.5L988.2 324.8L989.6 326.4L991.6 327.8L994.0 328.4L996.5 327.9L998.6 326.6L1000.0 324.6L1000.5 322.1L1000.1 319.7L998.7 317.6L997.1 316.2L994.8 314.2L992.3 311.9L989.9 309.6L988.0 307.8L986.6 306.3L985.5 305.0L984.6 303.8L983.8 302.7L983.1 301.5L982.5 300.1L981.9 298.7L981.4 297.2L981.1 295.7L980.8 294.2L980.7 292.9L980.7 291.6L980.8 290.2L981.0 288.8L981.2 287.4L981.5 286.1L981.9 284.9L982.4 283.6L982.9 282.1L983.4 280.6L983.7 279.1L984.0 277.7L984.2 276.3L984.4 275.0L984.6 273.6L984.8 272.2L985.0 270.7L985.2 269.1L985.3 267.5L985.4 265.8L985.5 264.2L985.5 262.6L985.5 261.0L985.4 259.4L985.3 257.8L985.2 256.2L985.0 254.6L984.8 253.0L984.4 251.3L984.0 249.5L983.5 247.6L982.9 245.6L982.2 243.5L981.4 241.4L980.5 239.4L979.4 237.4L978.3 235.5L977.2 233.7L976.2 232.1L975.2 230.6L974.1 229.1L972.9 227.6L971.7 226.2L970.8 225.0L970.1 224.2L968.2 222.8L966.0 222.2L963.6 222.5L961.6 223.6L960.2 225.5L959.5 227.7L959.8 230.0Z"/>
<path d="M951.8 242.4L952.7 242.9L953.9 243.6L955.3 244.3L956.7 245.1L958.1 246.0L959.4 246.8L960.9 247.8L962.4 248.8L964.0 249.8L965.5 250.9L967.1 252.0L968.7 253.2L970.2 254.4L971.6 255.5L972.8 256.6L973.9 257.9L975.0 259.5L976.0 261.1L976.9 262.7L977.6 263.8L978.3 264.6L979.3 265.1L980.4 265.2L981.4 264.9L982.3 264.2L982.8 263.2L982.9 262.1L982.6 261.1L982.0 260.0L981.3 258.3L980.4 256.4L979.3 254.3L978.0 252.3L976.5 250.6L974.9 249.0L973.3 247.5L971.8 246.1L970.3 244.8L968.7 243.6L967.2 242.3L965.7 241.1L964.1 240.0L962.7 238.9L961.1 237.9L959.6 236.9L958.1 236.1L956.9 235.4L956.1 234.9L954.5 234.4L952.8 234.5L951.3 235.3L950.2 236.5L949.7 238.1L949.8 239.8L950.6 241.3Z"/>
<path d="M995.4 265.0L995.3 266.2L995.2 268.0L995.1 269.9L995.0 271.8L994.7 273.5L994.3 275.1L993.9 276.7L993.4 278.3L992.8 279.8L992.1 281.2L991.3 282.4L990.4 283.6L989.3 284.9L988.2 286.1L987.1 287.2L986.2 288.2L985.3 289.0L984.3 289.8L983.3 290.8L982.3 291.8L981.3 293.1L980.2 294.4L979.2 295.7L978.4 296.8L977.9 297.5L977.3 298.8L977.3 300.2L977.9 301.5L978.8 302.5L980.1 303.0L981.5 303.0L982.8 302.5L983.8 301.5L984.3 300.7L984.9 299.5L985.7 298.2L986.5 297.0L987.2 295.9L987.9 295.0L988.7 294.2L989.5 293.3L990.4 292.3L991.4 291.1L992.5 290.0L993.6 288.7L994.8 287.3L996.0 285.7L997.2 284.1L998.1 282.3L998.9 280.5L999.6 278.6L1000.2 276.7L1000.8 274.8L1001.2 272.7L1001.5 270.5L1001.7 268.4L1001.8 266.7L1001.9 265.5L1001.8 264.2L1001.2 263.1L1000.1 262.3L998.9 262.0L997.6 262.1L996.5 262.7L995.7 263.8Z"/>
<path d="M1012.1 213.2L1012.1 214.0L1012.1 214.9L1012.0 216.1L1012.1 217.3L1012.1 218.5L1012.2 219.7L1012.3 221.0L1012.4 222.2L1012.6 223.5L1012.7 224.8L1012.8 226.2L1012.9 227.5L1013.0 228.9L1013.1 230.3L1013.0 231.6L1012.9 232.9L1012.6 234.3L1012.3 235.7L1011.9 237.1L1011.4 238.5L1010.9 239.9L1010.2 241.3L1009.5 242.8L1008.8 244.4L1008.3 246.1L1007.8 247.8L1007.5 249.4L1007.2 251.0L1007.0 252.6L1006.8 254.1L1006.7 255.7L1006.6 257.3L1006.6 258.9L1006.6 260.6L1006.7 262.2L1006.8 263.8L1007.0 265.3L1007.2 266.6L1007.4 267.9L1007.5 269.3L1007.6 271.0L1007.8 272.8L1007.8 274.7L1007.9 276.8L1007.8 279.3L1007.6 282.2L1007.3 285.6L1006.9 289.2L1006.4 292.6L1005.9 295.5L1005.3 298.0L1004.6 300.3L1003.9 302.4L1003.1 304.1L1002.2 305.6L1001.3 306.8L1000.3 307.7L999.1 308.6L997.7 309.5L996.5 310.3L995.3 310.9L994.1 311.3L992.8 311.7L991.6 312.1L990.7 312.4L989.1 313.5L988.1 315.1L987.8 317.0L988.2 318.9L989.3 320.4L990.9 321.4L992.8 321.7L994.6 321.3L995.4 320.9L996.5 320.3L998.0 319.4L999.7 318.4L1001.2 317.3L1002.6 316.1L1004.1 314.9L1005.7 313.4L1007.2 311.6L1008.6 309.5L1009.7 307.3L1010.7 305.0L1011.5 302.5L1012.2 299.8L1012.9 296.9L1013.4 293.7L1013.9 290.1L1014.3 286.4L1014.6 282.8L1014.9 279.7L1015.1 277.1L1015.1 274.7L1015.1 272.5L1015.1 270.6L1015.0 268.7L1014.8 266.9L1014.5 265.3L1014.2 264.0L1013.9 262.8L1013.8 261.7L1013.7 260.4L1013.7 259.0L1013.8 257.6L1013.8 256.2L1014.0 254.7L1014.1 253.3L1014.2 251.9L1014.4 250.5L1014.6 249.1L1014.8 247.8L1015.1 246.4L1015.5 245.0L1015.9 243.5L1016.4 241.9L1016.9 240.4L1017.4 238.9L1017.9 237.5L1018.5 236.1L1019.0 234.6L1019.6 233.2L1020.2 231.7L1020.7 230.2L1021.2 228.7L1021.7 227.3L1022.2 225.9L1022.6 224.4L1022.9 223.0L1023.2 221.6L1023.5 220.3L1023.7 219.1L1023.9 217.8L1024.0 216.5L1024.0 215.3L1024.1 214.3L1024.1 213.6L1023.7 211.3L1022.5 209.3L1020.6 207.9L1018.3 207.4L1016.0 207.8L1014.0 209.1L1012.6 211.0Z"/>
<path d="M993.5 219.8L993.9 220.8L994.5 222.2L995.2 223.8L996.0 225.6L996.9 227.3L997.9 229.1L998.9 230.9L1000.1 232.7L1001.2 234.6L1002.2 236.4L1003.2 238.3L1004.3 240.1L1005.2 241.9L1006.1 243.6L1006.9 245.1L1007.5 246.6L1008.1 248.0L1008.6 249.4L1009.0 250.6L1009.3 251.4L1009.8 252.2L1010.5 252.8L1011.4 253.0L1012.3 252.9L1013.1 252.5L1013.6 251.7L1013.9 250.9L1013.7 249.9L1013.5 249.1L1013.1 247.9L1012.7 246.4L1012.1 244.8L1011.5 243.1L1010.7 241.4L1009.9 239.6L1009.0 237.7L1008.1 235.8L1007.3 234.0L1006.6 232.1L1005.9 230.0L1005.3 228.0L1004.7 226.1L1004.2 224.3L1003.7 222.6L1003.1 220.8L1002.7 219.2L1002.3 217.8L1002.0 216.8L1001.0 215.3L999.6 214.2L997.9 213.8L996.2 214.1L994.7 215.0L993.6 216.4L993.2 218.1Z"/>
<path d="M986.4 233.1L987.2 233.7L988.4 234.5L989.7 235.5L991.1 236.5L992.4 237.5L993.7 238.6L995.1 239.7L996.6 240.8L998.0 242.0L999.3 243.2L1000.6 244.4L1001.8 245.7L1003.0 247.1L1004.1 248.3L1005.1 249.5L1005.9 250.6L1006.7 251.7L1007.4 252.9L1008.1 253.9L1008.5 254.6L1009.1 255.3L1009.9 255.8L1010.8 255.8L1011.7 255.6L1012.4 255.0L1012.8 254.2L1012.9 253.3L1012.6 252.4L1012.3 251.6L1011.8 250.5L1011.2 249.2L1010.4 247.7L1009.5 246.3L1008.5 244.9L1007.3 243.4L1006.1 241.9L1004.9 240.5L1003.7 239.0L1002.4 237.6L1001.2 236.1L999.9 234.7L998.7 233.3L997.4 231.9L996.1 230.6L994.7 229.4L993.4 228.2L992.3 227.3L991.6 226.6L990.2 225.9L988.6 225.7L987.0 226.2L985.8 227.3L985.0 228.7L984.9 230.3L985.4 231.8Z"/>
<path d="M1020.9 255.8L1020.2 257.6L1019.2 260.2L1018.1 263.2L1017.0 266.4L1015.8 269.5L1014.7 272.5L1013.5 275.7L1012.3 278.9L1011.1 282.2L1009.9 285.5L1008.7 288.8L1007.5 292.2L1006.2 295.6L1005.0 298.9L1003.9 301.9L1002.8 305.0L1001.6 308.0L1000.6 310.9L999.7 313.3L999.0 315.0L998.9 316.3L999.2 317.5L999.9 318.6L1001.0 319.2L1002.3 319.4L1003.5 319.1L1004.6 318.3L1005.2 317.2L1005.8 315.5L1006.7 313.1L1007.6 310.2L1008.7 307.1L1009.7 304.0L1010.8 300.9L1011.9 297.6L1013.1 294.2L1014.3 290.8L1015.4 287.4L1016.5 284.1L1017.7 280.8L1018.8 277.6L1019.9 274.4L1020.9 271.3L1022.0 268.2L1023.1 264.9L1024.1 261.9L1025.0 259.3L1025.6 257.4L1025.8 256.5L1025.5 255.5L1025.0 254.7L1024.1 254.2L1023.1 254.1L1022.2 254.3L1021.4 254.9Z"/>
<path d="M1049.4 263.2L1049.0 264.2L1048.4 265.6L1047.7 267.1L1047.0 268.8L1046.2 270.3L1045.4 271.9L1044.3 273.6L1043.2 275.4L1042.0 277.2L1041.0 279.0L1040.1 280.6L1039.3 282.0L1038.6 283.3L1038.0 284.3L1037.4 285.3L1036.6 286.5L1035.9 287.7L1035.1 288.8L1034.3 289.9L1033.4 291.0L1032.4 292.3L1031.2 293.6L1029.8 295.1L1028.5 296.5L1027.1 297.9L1025.8 299.1L1024.4 300.3L1023.1 301.5L1021.7 302.7L1020.4 303.9L1019.3 304.9L1018.2 305.9L1017.2 306.8L1016.0 307.7L1014.8 308.7L1013.3 309.8L1011.8 311.0L1010.1 312.2L1008.5 313.4L1006.8 314.6L1005.1 315.8L1003.2 317.1L1001.3 318.4L999.8 319.4L998.7 320.2L997.2 322.1L996.5 324.3L996.8 326.7L998.0 328.8L999.8 330.3L1002.1 330.9L1004.5 330.7L1006.6 329.5L1007.5 328.5L1008.8 327.1L1010.3 325.5L1011.9 323.9L1013.4 322.3L1014.8 320.9L1016.3 319.4L1017.7 317.9L1019.1 316.5L1020.5 315.2L1021.7 314.1L1022.8 313.1L1023.8 312.2L1024.9 311.2L1026.1 310.2L1027.3 309.0L1028.7 307.8L1030.1 306.6L1031.5 305.3L1032.9 304.0L1034.4 302.6L1035.9 301.2L1037.5 299.8L1039.0 298.2L1040.3 296.7L1041.5 295.1L1042.5 293.6L1043.4 292.2L1044.1 290.7L1044.8 289.3L1045.5 287.7L1045.9 286.3L1046.3 285.0L1046.6 283.7L1047.2 282.5L1048.1 281.0L1049.2 279.4L1050.4 277.7L1051.7 275.9L1052.8 274.3L1053.9 272.6L1055.0 270.9L1055.9 269.4L1056.7 268.2L1057.2 267.3L1057.7 265.6L1057.5 263.9L1056.7 262.4L1055.3 261.3L1053.7 260.8L1052.0 261.0L1050.5 261.9Z"/>
<path d="M1030.0 265.1L1030.5 266.1L1031.3 267.4L1032.2 269.0L1033.1 270.7L1033.8 272.2L1034.6 273.7L1035.3 275.3L1036.0 276.9L1036.7 278.4L1037.2 279.9L1037.7 281.2L1038.1 282.6L1038.5 283.9L1038.8 285.0L1039.1 285.8L1039.6 286.9L1040.6 287.7L1041.7 288.0L1042.9 287.9L1044.0 287.4L1044.8 286.4L1045.1 285.3L1045.0 284.1L1044.8 283.3L1044.4 282.2L1044.0 280.8L1043.6 279.4L1043.1 277.8L1042.6 276.3L1042.1 274.6L1041.5 272.9L1041.0 271.2L1040.5 269.5L1039.9 267.8L1039.2 265.9L1038.6 264.2L1038.1 262.7L1037.7 261.6L1036.8 260.3L1035.4 259.4L1033.8 259.1L1032.1 259.5L1030.8 260.5L1029.9 261.8L1029.6 263.5Z"/>
<path d="M1047.9 295.0L1047.2 295.2L1046.1 295.4L1044.7 295.7L1043.2 296.1L1041.8 296.5L1040.3 297.0L1038.9 297.5L1037.4 298.1L1036.0 298.6L1034.6 299.2L1033.0 299.7L1031.2 300.3L1029.5 300.8L1028.1 301.3L1027.0 301.6L1026.1 302.2L1025.4 303.1L1025.0 304.2L1025.2 305.3L1025.7 306.3L1026.6 307.0L1027.7 307.3L1028.9 307.1L1029.9 306.8L1031.3 306.3L1033.0 305.7L1034.7 305.2L1036.3 304.7L1037.8 304.3L1039.3 304.0L1040.7 303.7L1042.0 303.4L1043.2 303.3L1044.5 303.2L1045.7 303.1L1047.0 303.1L1048.1 303.1L1048.9 303.0L1050.4 302.5L1051.6 301.5L1052.3 300.1L1052.4 298.5L1051.9 297.1L1050.9 295.9L1049.5 295.1Z"/>
<path d="M976.5 314.5L977.7 315.4L979.5 316.8L981.4 318.5L983.1 320.1L984.4 321.6L985.7 323.3L986.9 325.0L988.0 326.8L988.9 328.8L989.7 331.0L990.5 333.2L991.3 335.1L992.1 336.7L993.0 338.1L993.8 339.4L994.6 340.4L995.3 341.1L995.9 341.6L996.5 341.9L997.2 342.0L998.1 341.9L999.0 341.8L1000.0 341.3L1001.2 340.6L1002.5 339.6L1003.9 338.3L1005.5 336.8L1006.9 335.1L1008.4 333.0L1009.9 330.7L1011.3 328.3L1012.7 326.0L1014.0 323.9L1015.1 321.9L1016.3 319.9L1017.6 317.9L1019.6 315.8L1022.0 313.7L1023.8 311.8L1024.2 310.3L1022.5 309.5L1019.3 309.0L1015.7 309.0L1012.7 309.5L1010.5 311.0L1008.7 313.3L1007.0 315.4L1005.1 316.5L1003.2 316.0L1001.2 314.5L999.2 312.7L997.1 311.6L994.7 311.2L992.3 311.1L989.7 311.3L987.2 311.6L984.1 312.0L980.8 312.7L977.9 313.5L976.5 314.5L976.9 315.6L978.8 317.0L981.1 318.5L983.1 320.1L984.5 321.8L985.9 323.8L987.1 325.6L988.0 326.8Z"/>
</g>
</g></svg>
<div class="abs" style="left:800px;top:400px;width:400px;height:200px;will-change:transform">
<div class="abs" style="right:202.6px;top:16.5px;height:18px;line-height:18px;font-size:10.833px;color:#868686;white-space:pre;letter-spacing:calc(-0.014px + 0.45px);margin-right:-0.45px">Show All Commands</div>
<div class="abs" style="left:208.4px;top:18.9px;width:25.0px;height:15.2px;background:#2e2e2e;border-radius:2.5px;box-shadow:inset 0 -1px 0 #262626;text-align:center;line-height:16.3px;font-size:9.17px;color:#868686;">Ctrl</div>
<div class="abs" style="left:243.5px;top:18.9px;width:14.5px;height:15.2px;background:#2e2e2e;border-radius:2.5px;box-shadow:inset 0 -1px 0 #262626;text-align:center;line-height:16.3px;font-size:9.17px;color:#868686;">3</div>
<div class="abs" style="left:233.5px;top:18.9px;width:10px;height:15.2px;text-align:center;line-height:16.3px;font-size:9.17px;color:#868686;">+</div>
<div class="abs" style="right:202.6px;top:46.5px;height:18px;line-height:18px;font-size:10.833px;color:#868686;white-space:pre;letter-spacing:calc(-0.030px + 0.45px);margin-right:-0.45px">Go to File</div>
<div class="abs" style="left:208.4px;top:48.9px;width:25.0px;height:15.2px;background:#2e2e2e;border-radius:2.5px;box-shadow:inset 0 -1px 0 #262626;text-align:center;line-height:16.3px;font-size:9.17px;color:#868686;">Ctrl</div>
<div class="abs" style="left:243.5px;top:48.9px;width:28.9px;height:15.2px;background:#2e2e2e;border-radius:2.5px;box-shadow:inset 0 -1px 0 #262626;text-align:center;line-height:16.3px;font-size:9.17px;color:#868686;">Shift</div>
<div class="abs" style="left:233.5px;top:48.9px;width:10px;height:15.2px;text-align:center;line-height:16.3px;font-size:9.17px;color:#868686;">+</div>
<div class="abs" style="left:283.0px;top:48.9px;width:15.0px;height:15.2px;background:#2e2e2e;border-radius:2.5px;box-shadow:inset 0 -1px 0 #262626;text-align:center;line-height:16.3px;font-size:9.17px;color:#868686;">R</div>
<div class="abs" style="left:272.7px;top:48.9px;width:10px;height:15.2px;text-align:center;line-height:16.3px;font-size:9.17px;color:#868686;">+</div>
<div class="abs" style="right:202.6px;top:76.5px;height:18px;line-height:18px;font-size:10.833px;color:#868686;white-space:pre;letter-spacing:calc(-0.103px + 0.45px);margin-right:-0.45px">Find in Files</div>
<div class="abs" style="left:208.4px;top:78.9px;width:25.0px;height:15.2px;background:#2e2e2e;border-radius:2.5px;box-shadow:inset 0 -1px 0 #262626;text-align:center;line-height:16.3px;font-size:9.17px;color:#868686;">Ctrl</div>
<div class="abs" style="left:243.5px;top:78.9px;width:16.2px;height:15.2px;background:#2e2e2e;border-radius:2.5px;box-shadow:inset 0 -1px 0 #262626;text-align:center;line-height:16.3px;font-size:9.17px;color:#868686;">H</div>
<div class="abs" style="left:233.5px;top:78.9px;width:10px;height:15.2px;text-align:center;line-height:16.3px;font-size:9.17px;color:#868686;">+</div>
<div class="abs" style="right:202.6px;top:106.5px;height:18px;line-height:18px;font-size:10.833px;color:#868686;white-space:pre;letter-spacing:calc(0.166px + 0.45px);margin-right:-0.45px">Start Debugging</div>
<div class="abs" style="left:208.4px;top:108.9px;width:25.0px;height:15.2px;background:#2e2e2e;border-radius:2.5px;box-shadow:inset 0 -1px 0 #262626;text-align:center;line-height:16.3px;font-size:9.17px;color:#868686;">Ctrl</div>
<div class="abs" style="left:243.5px;top:108.9px;width:24.5px;height:15.2px;background:#2e2e2e;border-radius:2.5px;box-shadow:inset 0 -1px 0 #262626;text-align:center;line-height:16.3px;font-size:9.17px;color:#868686;">F11</div>
<div class="abs" style="left:233.5px;top:108.9px;width:10px;height:15.2px;text-align:center;line-height:16.3px;font-size:9.17px;color:#868686;">+</div>
<div class="abs" style="right:202.6px;top:136.5px;height:18px;line-height:18px;font-size:10.833px;color:#868686;white-space:pre;letter-spacing:calc(0.191px + 0.45px);margin-right:-0.45px">Toggle Terminal</div>
<div class="abs" style="left:208.4px;top:138.9px;width:25.0px;height:15.2px;background:#2e2e2e;border-radius:2.5px;box-shadow:inset 0 -1px 0 #262626;text-align:center;line-height:16.3px;font-size:9.17px;color:#868686;">Ctrl</div>
<div class="abs" style="left:243.5px;top:138.9px;width:21.3px;height:15.2px;background:#2e2e2e;border-radius:2.5px;box-shadow:inset 0 -1px 0 #262626;text-align:center;line-height:16.3px;font-size:9.17px;color:#868686;">Alt</div>
<div class="abs" style="left:233.5px;top:138.9px;width:10px;height:15.2px;text-align:center;line-height:16.3px;font-size:9.17px;color:#868686;">+</div>
<div class="abs" style="left:275.2px;top:138.9px;width:14.6px;height:15.2px;background:#2e2e2e;border-radius:2.5px;box-shadow:inset 0 -1px 0 #262626;text-align:center;line-height:16.3px;font-size:9.17px;color:#868686;">T</div>
<div class="abs" style="left:265.0px;top:138.9px;width:10px;height:15.2px;text-align:center;line-height:16.3px;font-size:9.17px;color:#868686;">+</div>
</div>
<div style="position:absolute;left:403.60px;top:721.60px;height:19.00px;line-height:19.00px;font-size:9.167px;font-weight:400;color:#969696;letter-spacing:-0.474px;white-space:pre;">PROBLEMS</div>
<div style="position:absolute;left:498.70px;top:721.60px;height:19.00px;line-height:19.00px;font-size:9.167px;font-weight:400;color:#e7e7e7;letter-spacing:-0.257px;white-space:pre;">OUTPUT</div>
<div style="position:absolute;left:551.30px;top:721.60px;height:19.00px;line-height:19.00px;font-size:9.167px;font-weight:400;color:#969696;letter-spacing:-0.225px;white-space:pre;">TERMINAL</div>
<div style="position:absolute;left:612.30px;top:721.60px;height:19.00px;line-height:19.00px;font-size:9.167px;font-weight:400;color:#969696;letter-spacing:-0.484px;white-space:pre;">DEBUG CONSOLE</div>
<div class="abs" style="left:498.5px;top:743px;width:36px;height:1px;background:#e7e7e7"></div>
<div class="abs" style="left:458px;top:724.4px;width:23.8px;height:15px;border-radius:7.5px;background:#4d4d4d;color:#ffffff;font-size:9.17px;line-height:14.6px;text-align:center">1K+</div>
<div class="abs" style="left:1310.5px;top:723px;width:141.700px;height:17.200px;background:#3c3c3c"></div>
<div style="position:absolute;left:1318.40px;top:722.50px;height:18.00px;line-height:18.00px;font-size:10.833px;font-weight:400;color:#f0f0f0;letter-spacing:0.367px;white-space:pre;">[dvt] Build</div>
<svg width="300" height="30" style="left:1300px;top:716px" viewBox="1300 716 300 30"><g class="ic">
<path d="M1438.300 729.900l3.500 3.400 3.500-3.400"/>
<path d="M1466.500 727.600h12.200M1466.500 730.400h12.200M1466.500 733.200h7.500M1466.500 736h7.500M1475.600 733.400l2.800 2.800M1478.400 733.400l-2.800 2.800"/>
<rect x="1494.500" y="730.500" width="10" height="6.300" rx="1"/><path d="M1496.300 730.400v-1.800a3.200 3.200 0 0 1 6.300-.6"/>
<path d="M1549.300 733l3.700-3.500 3.700 3.500"/>
<path d="M1576.400 728.400l6.400 6.400M1582.800 728.400l-6.400 6.400"/>
</g>
<g class="ic" style="stroke:#4c4c4c"><path d="M1524.500 727.300h5l3.300 3.300v6.400h-8.300v-5.500M1529.500 727.300v3.300h3.300M1521.500 729.500h2.500a2 2 0 0 1 2 2M1523 728l-1.500 1.500 1.500 1.500"/></g>
</svg>
<div class="abs mono" id="output" style="left:387px;top:745px;width:1203px;height:148px;overflow:hidden;font-size:11.667px;color:#cccccc">
<div class="abs" style="left:17px;top:-10.53px;height:15.83px;line-height:15.83px;white-space:pre;letter-spacing:0.013px">*** SEMANTIC WARNING: WIDTH_MISMATCH_TRUNCATION: Returning &#x27;get_regs().size()&#x27; of &#x27;32-bit&#x27; type for function of &#x27;1-bit&#x27; return type at line: 1,204 in file: /</div>
<div class="abs" style="left:17px;top:5.30px;height:15.83px;line-height:15.83px;white-space:pre;letter-spacing:0.013px">home/andreea.georgian/git/dvt.main/ro.amiq.dvt.vscode/.dvt_home/predefined_projects/libs/uvm-1.1b/src/reg/uvm_reg.svh</div>
<div class="abs" style="left:17px;top:21.13px;height:15.83px;line-height:15.83px;white-space:pre;letter-spacing:0.013px">*** SEMANTIC WARNING: WIDTH_MISMATCH_TRUNCATION: Returning &#x27;root_hdl_paths.exists()&#x27; of &#x27;32-bit&#x27; type for function of &#x27;1-bit&#x27; return type at line: 2,123 in file: /home/</div>
<div class="abs" style="left:17px;top:36.97px;height:15.83px;line-height:15.83px;white-space:pre;letter-spacing:0.013px">andreea.georgian/git/dvt.main/ro.amiq.dvt.vscode/.dvt_home/predefined_projects/libs/uvm-1.1b/src/reg/uvm_reg_block.svh</div>
<div class="abs" style="left:17px;top:52.80px;height:15.83px;line-height:15.83px;white-space:pre;letter-spacing:0.013px">*** SEMANTIC WARNING: WIDTH_MISMATCH_TRUNCATION: Returning &#x27;size&#x27; of &#x27;64-bit&#x27; type for function of &#x27;32-bit&#x27; return type at line: 1,095 in file: /home/andreea.georgian/</div>
<div class="abs" style="left:17px;top:68.63px;height:15.83px;line-height:15.83px;white-space:pre;letter-spacing:0.013px">git/dvt.main/ro.amiq.dvt.vscode/.dvt_home/predefined_projects/libs/uvm-1.1b/src/reg/uvm_vreg.svh</div>
<div class="abs" style="left:17px;top:84.47px;height:15.83px;line-height:15.83px;white-space:pre;letter-spacing:0.013px">*** SEMANTIC WARNING: WIDTH_MISMATCH_TRUNCATION: Returning &#x27;top.uvm_report_enabled()&#x27; of &#x27;32-bit&#x27; type for function of &#x27;1-bit&#x27; return type at line: 119 in file: /home/</div>
<div class="abs" style="left:17px;top:100.30px;height:15.83px;line-height:15.83px;white-space:pre;letter-spacing:0.013px">andreea.georgian/git/dvt.main/ro.amiq.dvt.vscode/.dvt_home/predefined_projects/libs/uvm-1.1b/src/base/uvm_globals.svh</div>
<div class="abs" style="left:17px;top:116.13px;height:15.83px;line-height:15.83px;white-space:pre;letter-spacing:0.013px">*** Build done [total duration 11s.165ms] ***</div>
<div class="abs" style="left:0;top:0;width:1203px;height:3px;background:linear-gradient(#00000080,#00000000)"></div>
</div>
<div class="abs" style="left:1589px;top:745px;width:1px;height:148px;background:#383838"></div>
<div class="abs" style="left:1590px;top:891px;width:8px;height:2px;background:#5a5a5a"></div>
<div class="abs" style="left:1216px;top:848px;width:376.5px;height:35px;background:#252526;box-shadow:0 0 7px 2px rgba(0,0,0,.55)"></div>
<svg width="16" height="16" style="left:1223px;top:857.300px" viewBox="0 0 16 16"><circle cx="7.700" cy="8.100" r="6" fill="none" stroke="#4a9fea" stroke-width="1.200"/><path d="M7.700 7.400v3.700" stroke="#4a9fea" stroke-width="1.200"/><circle cx="7.700" cy="5.400" r=".75" fill="#4a9fea"/></svg>
<div style="position:absolute;left:1242.40px;top:856.00px;height:18.40px;line-height:18.40px;font-size:10.833px;font-weight:400;color:#cccccc;letter-spacing:0.221px;white-space:pre;">[dvt] Build done</div>
<div class="abs" style="left:379.200px;top:882.100px;width:7.800px;height:8.400px;background:#1f1f1f"></div>
<div class="abs" style="left:0;top:909.800px;width:1598px;height:1.200px;background:#15629f"></div>
<div style="position:absolute;left:24.40px;top:893.40px;height:18.00px;line-height:18.00px;font-size:10.000px;font-weight:400;color:#ffffff;letter-spacing:0.638px;white-space:pre;">0</div>
<div style="position:absolute;left:47.00px;top:893.40px;height:18.00px;line-height:18.00px;font-size:10.000px;font-weight:400;color:#ffffff;letter-spacing:-0.317px;white-space:pre;">1K</div>
<div style="position:absolute;left:85.80px;top:893.40px;height:18.00px;line-height:18.00px;font-size:10.000px;font-weight:400;color:#ffffff;letter-spacing:0.228px;white-space:pre;">On</div>
<div style="position:absolute;left:1407.90px;top:893.40px;height:18.00px;line-height:18.00px;font-size:10.000px;font-weight:400;color:#ffffff;letter-spacing:0.135px;white-space:pre;">uvm_ref_flow_1.1</div>
<div style="position:absolute;left:1505.70px;top:893.40px;height:18.00px;line-height:18.00px;font-size:10.000px;font-weight:400;color:#ffffff;letter-spacing:0.510px;white-space:pre;">default</div>
<svg width="1598" height="18" style="left:0;top:893px" viewBox="0 893 1598 18"><g fill="none" stroke="#fff" stroke-width="1" stroke-linecap="round" stroke-linejoin="round">
<circle cx="16.300" cy="902.400" r="5.100"/><path d="M14.300 900.400l4 4M18.300 900.400l-4 4"/>
<path d="M38.200 897.800l4.600 8.800h-9.200zM38.200 900.900v2.800"/><circle cx="38.200" cy="905.100" r=".3"/>
<path d="M73.400 899h8.600M75 902h5.400M76.600 905h2.200"/>
<path d="M1403.53 901.66L1404.77 901.81L1404.77 902.99L1403.53 903.14L1402.96 904.51L1403.73 905.50L1402.90 906.33L1401.91 905.56L1400.54 906.13L1400.39 907.37L1399.21 907.37L1399.06 906.13L1397.69 905.56L1396.70 906.33L1395.87 905.50L1396.64 904.51L1396.07 903.14L1394.83 902.99L1394.83 901.81L1396.07 901.66L1396.64 900.29L1395.87 899.30L1396.70 898.47L1397.69 899.24L1399.06 898.67L1399.21 897.43L1400.39 897.43L1400.54 898.67L1401.91 899.24L1402.90 898.47L1403.73 899.30L1402.96 900.29Z"/><circle cx="1399.8" cy="902.4" r="1.500"/>
<path d="M1493.300 902.300h8.200M1498.600 899.400l2.900 2.900-2.900 2.900"/>
<rect x="1553.500" y="901.300" width="8.400" height="5.600" rx=".8"/><path d="M1555.200 901.200v-1.700a2.500 2.500 0 0 1 5 0v1.700"/>
<path d="M1579 905.300h8.600l-1.300-1.700v-3a3.100 3.100 0 0 0-3.800-3M1580.300 903.600v-3c0-1.200.6-2.200 1.500-2.700M1582.300 906.800a1.200 1.200 0 0 0 2 0"/><circle cx="1586.800" cy="898.200" r="1.900" fill="#fff" stroke="none"/>
</g></svg>
</body></html>
